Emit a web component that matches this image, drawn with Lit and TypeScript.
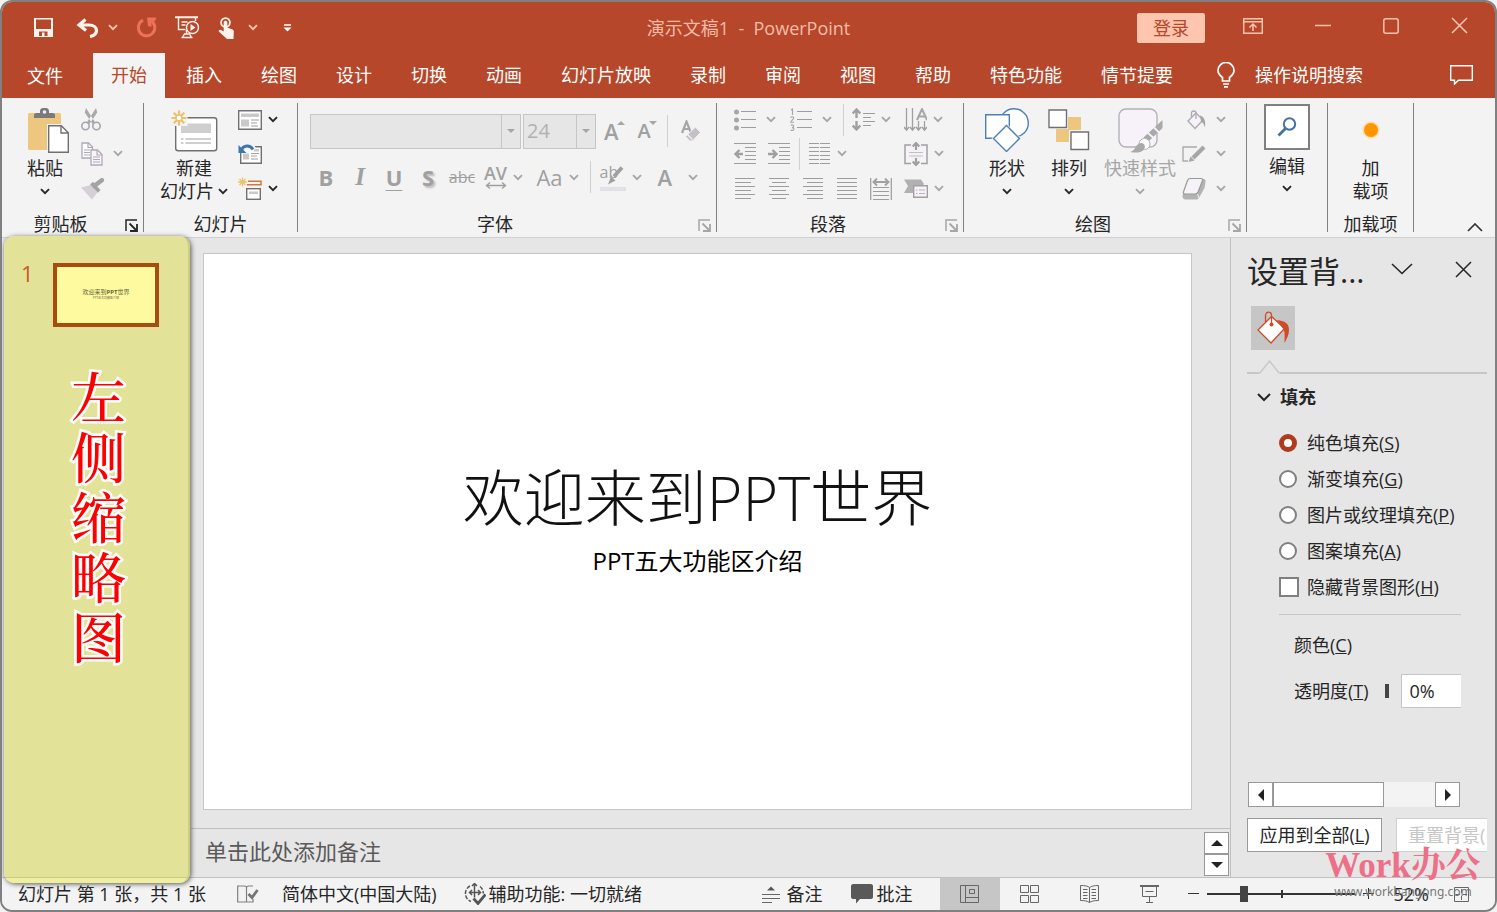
import { LitElement, html, svg, css } from "lit";
import { customElement, state } from "lit/decorators.js";

const icon = (w: number, h: number, body: unknown) =>
  html`<svg class="ic" width=${w} height=${h} viewBox="0 0 ${w} ${h}" fill="none" aria-hidden="true">${body}</svg>`;

const chev = () =>
  icon(10, 7, svg`<path d="M1 1.2l4 4 4-4" stroke="currentColor" stroke-width="1.9"/>`);

const lines = (rows: [number, number, number][], color = "#9d9d9d") =>
  rows.map(([x1, x2, y]) => svg`<path d="M${x1} ${y - 0.5}H${x2}" stroke=${color} stroke-width="1"/>`);

const I = {
  save: icon(19, 19, svg`<path d="M0 0h19v19H0z" fill="#fff3ee"/><path d="M2 1.5h15v9.500H2z" fill="#b7472a"/><path d="M5 13.500h8.500V18H5z" fill="#b7472a"/><path d="M8 14.500h2.500V18H8z" fill="#fff3ee"/>`),
  undo: icon(23, 20, svg`<path d="M9.500 1.500L3 7l7 5.500M3.500 7H13c5 0 7.500 2.600 7.500 5.500 0 3.200-2.500 5.300-6.500 6" stroke="#fff3ee" stroke-width="3.200"/>`),
  redo: icon(21, 21, svg`<path d="M7 3.200A8.200 8.200 0 1 0 15.500 4" stroke="#ec7156" stroke-width="3"/><path d="M11 0.500h9.500L19 4h-3.500v6L12 9z" fill="#ec7156"/>`),
  show: icon(25, 23, svg`<path d="M0 1.200h23" stroke="#fff3ee" stroke-width="2"/><path d="M3.500 2v11.500h7M20.500 2v3M6.500 6h6M6.500 9h4M11.500 14v4M6.500 21.500h11M9.500 18h5l2 3.500h-9z" stroke="#fff3ee" stroke-width="1.400"/><circle cx="17.500" cy="11.500" r="6" fill="#b7472a" stroke="#fff3ee" stroke-width="1.400"/><path d="M15.500 8l5 3.500-5 3.500z" fill="#fff3ee"/>`),
  touch: icon(17, 22, svg`<circle cx="7.500" cy="5.500" r="4.400" stroke="#fff3ee" stroke-width="1.800"/><path d="M5.700 5.500c0-2.400 3.600-2.400 3.600 0v5l5.200 2c1 .5 1.500 1.200 1.300 2.300L15.500 22H9L1 14.700c-1-1.200.6-2.700 2-1.700l2.700 1.500z" fill="#fff3ee"/>`),
  more: icon(9, 8, svg`<path d="M1 1h7" stroke="#fff" stroke-width="1.500"/><path d="M0.500 3.500h8l-4 4z" fill="#fff"/>`),
  ribbonOpt: icon(20, 16, svg`<path d="M.7.700h18.600v14.600H.7zM.7 3.700h18.600M10 13V6.500M6.500 9.500L10 6l3.500 3.500" stroke="#ffc5b1" stroke-width="1.500"/>`),
  min: icon(16, 16, svg`<path d="M0 7.500h16" stroke="#ffc5b1" stroke-width="1.400"/>`),
  max: icon(16, 16, svg`<rect x=".8" y=".8" width="14.400" height="14.400" rx="2" stroke="#ffc5b1" stroke-width="1.500"/>`),
  close: icon(17, 17, svg`<path d="M1 1l15 15M16 1L1 16" stroke="currentColor" stroke-width="1.500"/>`),
  bulb: icon(18, 26, svg`<path d="M5.500 19v-3.500C3 13.500 1 12 1 8.500a8 8 0 0 1 16 0c0 3.500-2 5-4.500 7V19zM6 22h6M7 24.800h4" stroke="#fff" stroke-width="1.700"/>`),
  comment: icon(23, 20, svg`<path d="M.7.700h21.600v14.500H8.500L4.500 19v-3.800H.7z" stroke="#fff" stroke-width="1.400"/>`),
  paste: icon(48, 45, svg`<g transform="translate(7)"><rect x="0" y="5" width="33" height="37" rx="1.500" fill="#edc67f"/><path d="M6 10V7c0-1.300 1-2 2.500-2h3.500V3c0-2 1.500-3 3-3h3c1.500 0 3 1 3 3v2h3.500c1.500 0 2.500.7 2.500 2v3z" fill="#7a7a7a"/><circle cx="16.500" cy="4" r="1.800" fill="#f3f3f3"/><path d="M19 16h17l6 8v21H19z" fill="#f3f3f3"/><path d="M20.700 17.700h12.600l7 7v19.600H20.700z" fill="#fff" stroke="#707070" stroke-width="1.400"/><path d="M33 18v7h7" stroke="#707070" stroke-width="1.400"/></g>`),
  cut: icon(21, 23, svg`<circle cx="4.500" cy="18" r="3.700" stroke="#a9a3ad" stroke-width="1.600"/><circle cx="15.500" cy="18" r="3.700" stroke="#a9a3ad" stroke-width="1.600"/><path d="M5.500 15L15 0l1.200 4.500L8.500 16zM14.500 15L5 0 3.800 4.500 11.500 16z" fill="#a9a9a9"/>`),
  copy: icon(22, 24, svg`<path d="M1 1h6.500l4 4v11H1z" fill="#fff" stroke="#b0a9b3" stroke-width="1.300"/><path d="M7 1v4.500h4.500M3 8h6M3 10.500h6M3 13h6" stroke="#b0a9b3" stroke-width="1.200"/><path d="M10 8h6.500l4.500 4.500V23H10z" fill="#f8f4fa" stroke="#b0a9b3" stroke-width="1.300"/><path d="M16 8v5h5M12 15h7M12 17.500h7M12 20h7" stroke="#b0a9b3" stroke-width="1.200"/>`),
  painter: icon(24, 22, svg`<path d="M0 9.500L10 7l6.500 7.500L11 21.500z" fill="#d4d0d6"/><path d="M9 6.500l3-2.700L19.500 12 17 14.700z" fill="#a3a3a3"/><path d="M14.500 7L20.800 2.200" stroke="#a3a3a3" stroke-width="4.500" stroke-linecap="round"/>`),
  newSlide: icon(48, 44, svg`<rect x="5.700" y="9.700" width="41" height="33" rx="2.500" fill="#fff" stroke="#707070" stroke-width="1.400"/><path d="M11 15.500h30V25H11z" fill="#cfcfcf"/><path d="M11 31h2.500M15.500 31H41M11 35h2.500M15.500 35H41" stroke="#9f9f9f" stroke-width="1.200"/><path d="M0 2h17.500v16H0z" fill="#f3f3f3"/><path d="M9 2.500v15M1.500 10h15M3.700 4.700l10.600 10.600M14.300 4.700L3.700 15.300" stroke="#edc06c" stroke-width="2.200"/><circle cx="9" cy="10" r="3" fill="#fff" stroke="#edc06c" stroke-width="1.500"/>`),
  layout: icon(24, 20, svg`<path d="M.7.700h22.600v18.600H.7z" fill="#fff" stroke="#707070" stroke-width="1.400"/><path d="M3 3.500h18V7H3zM3 9.500h8v7H3z" fill="#c9c9c9"/><path d="M13 10h8M13 13h6M13 16h7" stroke="#9f9f9f" stroke-width="1.200"/>`),
  reset: icon(24, 20, svg`<path d="M2.700 2.700h20.600v16.600H2.700z" fill="#fff" stroke="#707070" stroke-width="1.400"/><path d="M5 9.500h6v6H5zM16 5h5v2.500h-5z" fill="#c9c9c9"/><path d="M13 9.500h8M13 12h6M13 15h7" stroke="#9f9f9f" stroke-width="1.200"/><path d="M15.500 6C12.500-.5 5.500 0 3 6.500" stroke="#f3f3f3" stroke-width="6"/><path d="M15 5.500C12 .5 5.500 1 3.500 6" stroke="#3f76ae" stroke-width="2.800"/><path d="M.5 1v8h8z" fill="#3f76ae"/>`),
  section: icon(24, 23, svg`<path d="M4.500.5v9M0 5h9M1.500 2l6 6M7.500 2l-6 6" stroke="#edc06c" stroke-width="1.300"/><path d="M10 4.200h13v3.600H9" stroke="#d07b3c" stroke-width="1.500"/><rect x="8.700" y="11.700" width="13.600" height="10.600" fill="#fff" stroke="#707070" stroke-width="1.400"/><path d="M11 14.500h9V17h-9z" fill="#c9c9c9"/>`),
  launcher: icon(13, 13, svg`<path d="M1 12V1h11" stroke="currentColor" stroke-width="1.500"/><path d="M4.500 4.500l6.500 6.500M12 5v7H5" stroke="currentColor" stroke-width="1.800"/>`),
  bold: html`<span class="gl bold">B</span>`,
  italic: html`<span class="gl ital">I</span>`,
  under: html`<span class="gl bold ul">U</span>`,
  shadow: html`<span class="gl bold shade">S</span>`,
  strike: html`<span class="gl strike">abc</span>`,
  tri: icon(8, 4, svg`<path d="M0 4l4-4 4 4z" fill="#a6a6a6"/>`),
  triDown: icon(8, 4, svg`<path d="M0 0l4 4 4-4z" fill="#a6a6a6"/>`),
  spacing: icon(22, 7, svg`<path d="M1.500 3.500h19M5 .5l-3.500 3L5 6.500M17 .5l3.500 3-3.500 3" stroke="#a0a0a0" stroke-width="1.400"/>`),
  clear: icon(20, 22, svg`<path d="M1 13L5.500 1.500 10 13M2.500 9h6" stroke="#a6a6a6" stroke-width="2.200"/><path d="M4.500 16.500L14.500 7l5 5.500-8 8.500H8.500z" fill="#c4c0c7" stroke="#f3f3f3"/><path d="M6.500 14.500l5 5" stroke="#f3f3f3" stroke-width="1.200"/>`),
  pen: icon(18, 19, svg`<path d="M8 10.500L16 1.500" stroke="#a0a0a0" stroke-width="3.800"/><path d="M5 10.500l4.500 4-7.500 4z" fill="#a0a0a0"/>`),
  bullets: icon(22, 22, svg`<circle cx="2.500" cy="3" r="2.500" fill="#a6a6a6"/><circle cx="2.500" cy="11" r="2.500" fill="#a6a6a6"/><circle cx="2.500" cy="19" r="2.500" fill="#a6a6a6"/>${lines([[7, 22, 3], [7, 22, 11], [7, 22, 19]])}`),
  numbers: icon(22, 24, svg`<path d="M1 2l1.500-1v6M.7 9.800c.5-1.500 3-1.300 3 .3 0 1.200-3 3-3 4.200H4M.7 17.300c1-.8 3-.5 3 .8S2 19.600 2 19.600s2 0 2 1.500-2.500 1.700-3.300.9" stroke="#a6a6a6" stroke-width="1.100"/>${lines([[7, 22, 4], [7, 22, 12], [7, 22, 20]])}`),
  lineSp: icon(23, 23, svg`<path d="M4.500 2v8M4.500 13v8M.7 5.500l3.800-4 3.800 4M.7 17.500l3.800 4 3.800-4" stroke="#a0a0a0" stroke-width="2.400"/>${lines([[11, 23, 6], [11, 19, 10], [11, 23, 14], [11, 19, 18]])}`),
  textDir: icon(23, 24, svg`<path d="M2.500 0v22M8.500 0v22M14.500 13v9M20.500 13v9" stroke="#a0a0a0" stroke-width="1.300"/><path d="M0 19l2.500 3L5 19M6 19l2.500 3 2.500-3M12 19l2.500 3 2.500-3M18 19l2.500 3 2.500-3" stroke="#a0a0a0" stroke-width="1.500"/><path d="M13 12L18 1l5 11M14.800 8.500h6.500" stroke="#a6a6a6" stroke-width="2"/>`),
  outdent: icon(22, 22, svg`${lines([[0, 22, 1], [11, 22, 5], [11, 22, 9], [11, 22, 13], [11, 22, 17], [0, 22, 21]])}<path d="M9 11H2.500M5.500 7L1.500 11l4 4" stroke="#a0a0a0" stroke-width="2.400"/>`),
  indent: icon(22, 22, svg`${lines([[0, 22, 1], [11, 22, 5], [11, 22, 9], [11, 22, 13], [11, 22, 17], [0, 22, 21]])}<path d="M0 11h7M4.500 7l4 4-4 4" stroke="#a0a0a0" stroke-width="2.400"/>`),
  columns: icon(22, 22, svg`${lines([1, 5, 9, 13, 17, 21].flatMap((y) => [[0, 10, y], [11, 21, y]] as [number, number, number][]))}`),
  vAlign: icon(24, 24, svg`<path d="M7 3H1v18.500h6M17 3h6v18.500h-6" fill="#f7f2fa" stroke="#a0a0a0" stroke-width="1.500"/><path d="M5 10.500h14M5 14h14" stroke="#c4bdc8" stroke-width="1.200"/><path d="M12 8V1.500M8.700 4.500L12 1l3.300 3.500M12 16v6.500M8.700 19.500L12 23l3.300-3.500" stroke="#a0a0a0" stroke-width="2.200"/>`),
  left: icon(20, 22, svg`${lines([[0, 20, 1], [0, 16, 5], [0, 20, 9], [0, 16, 13], [0, 20, 17], [0, 16, 21]])}`),
  center: icon(20, 22, svg`${lines([[0, 20, 1], [3, 17, 5], [0, 20, 9], [3, 17, 13], [0, 20, 17], [3, 17, 21]])}`),
  right: icon(20, 22, svg`${lines([[0, 20, 1], [4, 20, 5], [0, 20, 9], [4, 20, 13], [0, 20, 17], [4, 20, 21]])}`),
  justify: icon(20, 22, svg`${lines([1, 5, 9, 13, 17, 21].map((y) => [0, 20, y] as [number, number, number]))}`),
  distribute: icon(22, 22, svg`<path d="M.7 0v22M21.300 0v22" stroke="#a0a0a0" stroke-width="1.300"/><path d="M4 4h14M7 .5L3.500 4 7 7.500M15 .5L18.500 4 15 7.500" stroke="#a0a0a0" stroke-width="1.900"/>${lines([[3, 19, 10], [3, 19, 14], [3, 19, 18], [3, 19, 22]])}`),
  smart: icon(24, 19, svg`<path d="M0 .5h17l3 4.500-4 4H9v5H0l4-7z" fill="#b1b1b1"/><path d="M9.700 6.700h13.600v11.600H9.700z" fill="#f7f2fa" stroke="#a0a0a0" stroke-width="1.400"/><path d="M12 11h1.500M15 11h6M12 14.500h1.500M15 14.500h6" stroke="#b8b0bd" stroke-width="1.200"/>`),
  shapes: icon(44, 44, svg`<circle cx="29" cy="15" r="14.300" fill="#fff" stroke="#4c80b6" stroke-width="1.400"/><path d="M.7 6.700h23.600v23.600H.7z" fill="#fff" stroke="#4c80b6" stroke-width="1.400"/><path d="M21.500 15.500l15 15-15 15-15-15z" fill="#f3f3f3"/><path d="M21.500 17.500l13 13-13 13-13-13z" fill="#fff" stroke="#4c80b6" stroke-width="1.400"/>`),
  arrange: icon(42, 42, svg`<path d="M20 8h13v13H20zM8 20h13v13H8z" fill="#edc67f"/><path d="M1 1h17.500v17.500H1zM23 23h17.500v17.500H23z" fill="#fff" stroke="#f3f3f3" stroke-width="3"/><path d="M1 1h17.500v17.500H1zM23 23h17.500v17.500H23z" fill="#fff" stroke="#707070" stroke-width="1.400"/>`),
  quick: icon(46, 46, svg`<rect x="2" y="2" width="38" height="38" rx="7" fill="#f7f2fa" stroke="#b5b0b8" stroke-width="1.400"/><path d="M45.500 13v8L32 34l-5.500-3.500z" fill="#a9a9a9"/><path d="M37 20.500l5 5M31 26l5.500 5" stroke="#f3f3f3" stroke-width="1.800"/><circle cx="27.500" cy="37" r="5.500" fill="#fff" stroke="#b5b0b8"/><path d="M13 45c6-1 5-9 12-9 3.500 1 3.500 5 1.500 7-3 3-8 3-13.500 2z" fill="#a9a9a9"/>`),
  fill: icon(24, 20, svg`<g transform="translate(2)"><path d="M4 11l8-8 7 7-8 8.500z" fill="#f7f2fa" stroke="#aaa" stroke-width="1.300"/><path d="M7.500 7V2.500C8 .5 11.500.5 12 2.500V9" stroke="#aaa" stroke-width="1.300"/><path d="M16 5.500c4 1 6 5 5 12-1-3-2-5-4-6z" fill="#a6a6a6"/></g>`),
  outline: icon(24, 20, svg`<path d="M15 3H1v14h5" stroke="#aaa" stroke-width="1.400"/><path d="M11 14L22 3" stroke="#a6a6a6" stroke-width="4.200"/><path d="M8.500 12.500l4 4L6.500 18z" fill="#a6a6a6"/>`),
  effect: icon(24, 23, svg`<path d="M7 2h14c2 0 3 1 2.500 3l-1 6-5 9c-1 2-2 2.500-4 2.500H3.500c-2 0-3.500-2-3-4z" fill="#b3b3b3"/><path d="M8 1.500h11c1.500 0 2 .8 1.500 2L16 15c-.6 1.300-1.500 2-3 2H3c-1.500 0-2-1-1.500-2.300L5.500 3.500c.6-1.300 1.200-2 2.500-2z" fill="#f7f2fa" stroke="#999" stroke-width="1.200"/><path d="M15.500 17l1.500 4" stroke="#f3f3f3"/>`),
  find: icon(20, 20, svg`<circle cx="12.500" cy="7" r="5.700" stroke="#4272a8" stroke-width="2"/><path d="M8.500 11.500L1.500 18.500" stroke="#4272a8" stroke-width="2.800"/>`),
  addin: icon(18, 18, svg`<circle cx="9" cy="9" r="8.500" fill="#ffdca8"/><circle cx="9" cy="9" r="7" fill="#ff9500"/>`),
  collapse: icon(16, 9, svg`<path d="M1 8l7-7 7 7" stroke="#333" stroke-width="1.700"/>`),
  paneDown: icon(22, 12, svg`<path d="M1 1l10 9.500L21 1" stroke="#262626" stroke-width="1.600"/>`),
  bucket: icon(34, 34, svg`<path d="M2 19L15.500 5.500 28.500 17.500 15 32z" fill="#fff" stroke="#cf4b27" stroke-width="1.300"/><path d="M9.500 11V4.500C10-.2 15.500 0 15.500 4.500V13" stroke="#cf4b27" stroke-width="1.300"/><circle cx="15.500" cy="13.500" r="2" fill="#cf4b27"/><path d="M21 9c9 1 12 4 12 10 0 5-2 8-4.500 13 0-7 1-12-2-15z" fill="#cf4b27"/>`),
  book: icon(22, 20, svg`<path d="M9.500 3.500v15M9.500 18H.7V2h6.500c1.500 0 2.300.5 2.300 1.500C9.500 2.500 10.500 2 12 2h4M9.500 18H16v-3" stroke="#808080" stroke-width="1.200"/><path d="M11.500 10l3.500 3.500L20.500 6" stroke="#757575" stroke-width="2.800"/>`),
  access: icon(22, 22, svg`<path d="M6 3A8.500 8.500 0 0 0 7 18.500M16 3.500c2 1.500 3.300 4 3.300 7" stroke="#555" stroke-width="1.500" stroke-dasharray="4 1.500"/><path d="M10.500 .5v9M8 3l2.500-2.500L13 3M5.500 9.500h10.500M8 7L5.500 9.500 8 12M10.500 9.500v5M14 7l2.500 2.500L14 12" stroke="#555" stroke-width="1.500"/><path d="M9.500 15.500l4.500 5 7.500-9" stroke="#555" stroke-width="2.800"/>`),
  notes: icon(18, 17, svg`<path d="M5 4.500l4-4 4 4z" fill="#555"/><path d="M0 8.500h18M0 12.500h18M0 16.500h10" stroke="#666" stroke-width="1"/>`),
  bubble: icon(22, 20, svg`<path d="M2 0h18c1 0 2 1 2 2v11c0 1-1 2-2 2H9l-4 4.500V15H2c-1 0-2-1-2-2V2C0 1 1 0 2 0z" fill="#595959"/>`),
  normal: icon(19, 18, svg`<path d="M.5.500h18v17H.5zM5.500 1v16M5.500 12.500H18M9.500 4.500h5v4h-5z" stroke="#666" stroke-width="1"/>`),
  sorter: icon(19, 18, svg`<path d="M.5.500h8v7h-8zM10.500.5h8v7h-8zM.5 10.500h8v7h-8zM10.500 10.500h8v7h-8z" stroke="#666" stroke-width="1"/>`),
  reading: icon(19, 18, svg`<path d="M9.500 2.500v15M9.500 2.500C8 1 5 .5.500.5v15c4 0 7 .5 9 2 2-1.500 5-2 9-2V.5c-4 0-7 .5-9 2zM3 4.500h4.500M3 7.500h4.500M3 10.500h4.500M3 13.500h4.500M11.500 4.500H16M11.500 7.500H16M11.500 10.500H16M11.500 13.500H16" stroke="#666" stroke-width="1"/>`),
  present: icon(19, 18, svg`<path d="M0 1h19" stroke="#666" stroke-width="2"/><path d="M2.500 2v9.500h14V2M5.500 6.500h8M9.500 11.500v6M6 17.500h7" stroke="#666" stroke-width="1"/>`),
  fit: icon(15, 15, svg`<path d="M.5.500h14v14H.5z" stroke="#666" stroke-width="1"/><path d="M7.500 2v4M7.500 9v4M2 7.500h4M9 7.500h4" stroke="#666" stroke-width="1"/>`),
};

const TABS = ["插入", "绘图", "设计", "切换", "动画", "幻灯片放映", "录制", "审阅", "视图", "帮助", "特色功能", "情节提要"];
const FILLS: [string, string][] = [["纯色填充", "S"], ["渐变填充", "G"], ["图片或纹理填充", "P"], ["图案填充", "A"]];

@customElement("app-root")
export class AppRoot extends LitElement {
  @state() private fill = 0;

  static styles = css`
    :host { display: block; height: 100vh; background: #f2f2f2; color: #262626;
      font: 18px/24px "Open Sans", "Noto Sans CJK SC", sans-serif; }
    * { box-sizing: border-box; }
    button, input, select { font: inherit; color: inherit; background: none; border: 0; padding: 0; margin: 0; border-radius: 0; }
    button { display: flex; align-items: center; justify-content: center; white-space: nowrap; }
    .ic { display: block; flex: none; }
    .window { height: 100%; display: flex; flex-direction: column; border: 2px solid #808080; border-radius: 12px; overflow: hidden; background: #e6e6e6; }

    .titlebar { display: grid; grid-template-columns: 1fr auto 1fr; align-items: center; height: 51px; background: #b7472a; color: #ffc5b1; flex: none; }
    .quick { display: flex; align-items: center; padding-left: 32px; gap: 18px; }
    .quick .save { margin-right: 5px; }
    .quick .split { display: flex; align-items: center; gap: 9px; }
    .quick .touch { gap: 13px; }
    .quick .more { margin-left: 7px; }
    .doc { margin: 0; font: inherit; white-space: pre; color: #f5bba8; }
    .sys { display: flex; align-items: center; justify-content: flex-end; padding-right: 27px; }
    .login { width: 68px; height: 30px; background: #fec5af; color: #b7472a; border-radius: 2px; margin-right: 38px; }
    .sys .ctl { margin-right: 52px; height: 22px; padding-bottom: 4px; }
    .sys .ctl.last { margin-right: 0; }

    .tabs { display: flex; align-items: stretch; height: 45px; background: #b7472a; color: #fff; flex: none; gap: 3px; }
    .tabs button { padding-bottom: 2px; }
    .tab { padding: 0 18px; }
    .tab.file { padding: 0 27px 0 25px; }
    .tab.on { background: #f3f3f3; color: #b7472a; }
    .tell { margin-left: 23px; gap: 20px; }
    .talk { margin-left: auto; margin-right: 22px; }

    .ribbon { display: flex; height: 140px; background: #f3f3f3; border-bottom: 1px solid #d0d0d0; flex: none; padding: 5px 0; }
    .group { display: flex; flex-direction: column; border-right: 1px solid #808080; flex: none; }
    .body { display: flex; flex: 1; min-height: 0; }
    .cap { display: flex; align-items: center; height: 16px; line-height: 16px; text-align: center; white-space: nowrap; color: #262626; }
    .cap span { flex: 1; }
    .cap button { width: 24px; padding-top: 2px; color: #a6a6a6; }
    .cap .dark { color: #262626; }
    .big { flex-direction: column; justify-content: flex-start; gap: 0; line-height: 23px; }
    .big .pic { height: 54px; display: flex; align-items: center; justify-content: center; }
    .big .chev, .big .row { height: 23px; display: flex; align-items: center; gap: 4px; }
    .stack { display: grid; grid-template-rows: 33px 35px 35px; align-items: center; justify-items: start; align-content: start; }
    .pair { gap: 6px; }
    .pair.wide { gap: 10px; }
    .off { color: #a6a6a6; }
    .clip { width: 142px; } .clip .body { padding-left: 18px; gap: 11px; } .clip .big { width: 50px; } .clip .pair { gap: 10px; }
    .slides { width: 154px; } .slides .body { padding-left: 10px; gap: 4px; } .slides .big { width: 80px; }
    .font { width: 419px; } .font .body { display: block; padding: 5px 0 0 12px; }
    .frow { display: flex; align-items: center; height: 46px; }
    .frow.fmt { display: grid; grid-template-columns: 34px 34px 34px 34px 34px 49px 59px 7px 53px 61px; justify-items: center; margin-left: -1px; }
    .combo { display: flex; width: 211px; height: 35px; border: 1px solid #c6c6c6; background: #e6e6e6; margin-right: 2px; }
    .combo.size { width: 73px; margin-right: 8px; }
    .combo select { appearance: none; flex: 1; min-width: 0; padding-left: 3px; font-size: 20px; color: #b1b1b1; opacity: 1; }
    .combo .drop { width: 19px; border-left: 1px solid #c6c6c6; display: flex; align-items: center; justify-content: center; }
    .bar { width: 1px; height: 32px; background: #d0d0d0; }
    .gl { font-size: 22px; line-height: 26px; color: #a0a0a0; }
    .bold { font-weight: 700; }
    .ital { font-family: "Liberation Serif", serif; font-style: italic; font-weight: 700; font-size: 25px; }
    .ul { text-decoration: underline; text-decoration-thickness: 1px; text-underline-offset: 4px; }
    .shade { text-shadow: 2px 2px 2px #bbb; }
    .strike { font-size: 16px; text-decoration: line-through; }
    .semi { font-weight: 600; }
    .sizer { align-items: flex-start; margin-right: 13px; }
    .sizer .ic { margin-top: 3px; margin-left: -2px; }
    .sizer .gl.small { font-size: 20px; }
    .sizer.down { margin-right: 10px; }
    .av { display: flex; flex-direction: column; align-items: center; font-size: 18px; line-height: 17px; font-weight: 600; color: #a0a0a0; }
    .hl { display: flex; width: 26px; height: 28px; align-items: flex-start; border-bottom: 4px solid #e3dfe6; font-size: 16px; line-height: 18px; color: #a0a0a0; }
    .hl .ic { margin: 3px 0 0 -12px; }
    .fontA { width: 24px; text-align: left; }
    .clearfmt { margin-left: 13px; }
    .para { width: 247px; } .para .body { display: block; padding-left: 11px; }
    .prow { display: grid; height: 35px; align-items: center; justify-items: center; }
    .p1 { height: 33px; grid-template-columns: 54px 58px 7px 49px 55px; }
    .p2 { grid-template-columns: 34px 34px 7px 50px 43px 55px; }
    .p3 { grid-template-columns: 34px 34px 34px 34px 34px 51px; }
    .p2 .end { grid-column: 6; }
    .draw { width: 283px; } .draw .body { padding-left: 12px; } .draw .big { width: 62px; } .draw .big.off { width: 80px; } .draw .stack { padding-left: 2px; } .draw .pair { gap: 10px; }
    .edit { width: 81px; } .edit .body { justify-content: center; } .edit .big .pic { width: 46px; height: 46px; margin: 1px 0 5px; background: #fff; border: 2px solid #808080; }
    .edit .big { line-height: 22px; }
    .adds { width: 86px; } .adds .body { justify-content: center; }
    .fold { margin: auto 12px 0 auto; }

    .main { display: grid; grid-template-columns: 189px minmax(0, 1fr) 265px; flex: 1; min-height: 0; position: relative; }
    .thumbs { position: absolute; z-index: 2; left: 2px; top: -2px; bottom: -6px; width: 186px; border-radius: 10px; border-right: 2px solid #cfcd83;
      background: linear-gradient(to top, #efef9e 5px, #c9c989 5px, #c9c989 6px, #e3e299 6px); box-shadow: 1px 1px 5px #555; display: flex; flex-direction: column; padding: 27px 29px 0 17px; }
    .thumb { display: flex; justify-content: space-between; color: #c55a28; font-size: 22px; line-height: 20px; }
    .mini { width: 106px; height: 64px; border: 4px solid #a94c10; background: #fdfa9f; color: #66643c; display: flex; flex-direction: column; align-items: center; justify-content: center; font-size: 6px; line-height: 8px; padding-bottom: 2px; }
    .mini small { font-size: 3px; line-height: 4px; }
    .callout { margin: 38px 0 0 17px; align-self: center; width: 60px; font-family: "Noto Serif CJK SC", "Noto Sans CJK SC", serif; font-weight: 500; font-size: 55px; line-height: 60px; text-align: center; color: #f00; -webkit-text-stroke: 5px #fff; paint-order: stroke fill; }
    .stage { grid-column: 2; display: flex; flex-direction: column; min-width: 0; }
    .canvas { flex: 1; display: flex; padding: 15px 38px 18px 12px; border-bottom: 1px solid #c0c0c0; }
    .slide { flex: 1; background: #fff; border: 1px solid #c6c6c6; display: flex; flex-direction: column; align-items: center; padding-top: 204px; color: #111; }
    .slide h2 { margin: 0; font-weight: 300; font-size: 61px; line-height: 80px; }
    .slide p { margin: 7px 0 0; font-size: 24px; line-height: 32px; color: #000; }
    .note { display: flex; justify-content: space-between; height: 48px; padding: 3px 1px 0 14px; }
    .note input { flex: 1; font-size: 22px; color: #5a5a5a; height: 38px; outline: 0; }
    .note input::placeholder { color: #5a5a5a; opacity: 1; }
    .pager { display: flex; flex-direction: column; }
    .pager button { width: 25px; height: 22px; border: 1px solid #999; background: #fff; }

    .pane { grid-column: 3; border-left: 1px solid #c0c0c0; padding: 11px 8px 25px 16px; display: flex; flex-direction: column; min-width: 0; overflow: hidden; }
    .phead { display: flex; align-items: center; height: 44px; }
    .phead h1 { margin: 0; font-weight: 400; font-size: 31px; line-height: 44px; width: 144px; white-space: nowrap; }
    .phead .x { margin-left: auto; margin-right: 15px; padding-bottom: 4px; }
    .phead .v { padding-bottom: 4px; }
    .paint { width: 44px; height: 44px; background: #c6c6c6; margin: 13px 0 0 4px; flex: none; }
    .notch { display: flex; align-items: flex-end; margin-top: 10px; }
    .notch i { height: 2px; width: 12px; background: #c6c6c6; }
    .notch i.rest { flex: 1; }
    .sect { justify-content: flex-start; gap: 9px; font-weight: 700; height: 24px; margin: 11px 0 16px 10px; }
    .opt { display: flex; align-items: center; height: 36px; padding-left: 32px; gap: 10px; white-space: nowrap; }
    .opt input { appearance: none; width: 18px; height: 18px; border: 2px solid #808080; border-radius: 50%; background: #fff; flex: none; }
    .opt input:checked { border: 5px solid #b03a20; }
    .opt input.sq { width: 20px; height: 20px; border-radius: 0; }
    .opt.check { gap: 8px; }
    .rule { height: 1px; background: #c6c6c6; margin: 9px 26px 0 32px; }
    .field { display: flex; align-items: center; padding-left: 47px; margin-top: 18px; height: 24px; white-space: nowrap; }
    .field.tr { margin-top: 17px; height: 34px; padding-right: 26px; }
    .tr .knob { appearance: none; width: 4px; height: 14px; margin: 0 12px 0 16px; }
    .knob::-webkit-slider-thumb { appearance: none; width: 4px; height: 14px; background: #444; }
    .tr .pct { flex: 1; min-width: 0; height: 34px; background: #fff; border: 1px solid #c6c6c6; border-right: 0; padding-left: 8px; }
    .hbar { display: flex; margin: auto 27px 11px 1px; height: 25px; background: #f3f3f3; }
    .hbar button { width: 25px; border: 1px solid #999; background: #fff; }
    .hbar .grip { width: 111px; margin-right: auto; }
    .acts { display: flex; gap: 14px; height: 34px; }
    .acts button { border: 1px solid #999; background: #fff; width: 135px; flex: none; }
    .acts button.dim { color: #c6c6c6; border-color: #d0d0d0; border-right: 0; flex: 1; justify-content: flex-start; padding-left: 11px; }

    .status { display: flex; align-items: center; height: 33px; background: #f3f3f3; border-top: 1px solid #c0c0c0; flex: none; padding: 0 26px 0 16px; white-space: nowrap; }
    .status .bk { margin: 0 23px 0 31px; }
    .status .ac { margin-left: 27px; gap: 3px; }
    .status .nt { margin-left: auto; gap: 7px; margin-right: 28px; }
    .status .cm { gap: 4px; margin-right: 27px; }
    .status .vw { width: 60px; height: 32px; }
    .status .vw.on { background: #c6c6c6; }
    .zoom { display: flex; align-items: center; gap: 8px; margin-left: 8px; }
    .zoom input { appearance: none; width: 148px; height: 16px; background: linear-gradient(#333, #333) 74px 50% / 2px 8px no-repeat, linear-gradient(#333, #333) 0 50% / 100% 2px no-repeat; }
    .zoom input::-webkit-slider-thumb { appearance: none; width: 8px; height: 16px; background: #444; }
    .pctz { margin: 0 25px 0 20px; }

    .mark { position: absolute; z-index: 3; right: 14px; top: 609px; width: 156px; display: flex; flex-direction: column; align-items: center; pointer-events: none; white-space: nowrap; }
    .mark b { font: 700 35px/38px "Liberation Serif", "Noto Serif CJK SC", "Noto Sans CJK SC", serif; color: #ee6f88; }
    .mark span { font: 12px/14px "Noto Sans", sans-serif; color: #777; }
  `;

  private cap(text: string, launch = "") {
    return html`<div class="cap"><span>${text}</span>${launch ? html`<button class=${launch} aria-label="${text}设置">${I.launcher}</button>` : ""}</div>`;
  }

  private b(ic: unknown, label: string, drop = false, cls = "") {
    return html`<button class="pair ${cls}" aria-label=${label}>${ic}${drop ? chev() : ""}</button>`;
  }

  private big(ic: unknown, label: string, cls = "") {
    return html`<button class="big ${cls}"><span class="pic">${ic}</span><span>${label}</span><span class="chev">${chev()}</span></button>`;
  }

  private renderTitle() {
    return html`<header class="titlebar">
      <div class="quick">
        <button class="save" aria-label="保存">${I.save}</button>
        <button class="split" aria-label="撤消">${I.undo}${chev()}</button>
        <button aria-label="重复">${I.redo}</button>
        <button aria-label="从头开始">${I.show}</button>
        <button class="split touch" aria-label="触摸模式">${I.touch}${chev()}</button>
        <button class="more" aria-label="自定义">${I.more}</button>
      </div>
      <h1 class="doc">演示文稿1  -  PowerPoint</h1>
      <div class="sys">
        <button class="login">登录</button>
        <button class="ctl" aria-label="功能区显示选项">${I.ribbonOpt}</button>
        <button class="ctl" aria-label="最小化">${I.min}</button>
        <button class="ctl" aria-label="最大化">${I.max}</button>
        <button class="ctl last" aria-label="关闭">${I.close}</button>
      </div>
    </header>
    <nav class="tabs">
      <button class="tab file">文件</button><button class="tab on">开始</button>
      ${TABS.map((t) => html`<button class="tab">${t}</button>`)}
      <button class="tell">${I.bulb}<span>操作说明搜索</span></button>
      <button class="talk" aria-label="批注">${I.comment}</button>
    </nav>`;
  }

  private renderRibbon() {
    return html`<section class="ribbon">
      <div class="group clip"><div class="body">
        ${this.big(I.paste, "粘贴")}
        <div class="stack off">${this.b(I.cut, "剪切")}${this.b(I.copy, "复制", true)}${this.b(I.painter, "格式刷")}</div>
      </div>${this.cap("剪贴板", "dark")}</div>

      <div class="group slides"><div class="body">
        <button class="big"><span class="pic">${I.newSlide}</span><span>新建</span><span class="row">幻灯片${chev()}</span></button>
        <div class="stack">${this.b(I.layout, "版式", true)}${this.b(I.reset, "重置")}${this.b(I.section, "节", true)}</div>
      </div>${this.cap("幻灯片")}</div>

      <div class="group font off"><div class="body">
        <div class="frow">
          <div class="combo"><select aria-label="字体" disabled></select><span class="drop">${I.triDown}</span></div>
          <div class="combo size"><select aria-label="字号" disabled><option>24</option></select><span class="drop">${I.triDown}</span></div>
          <button class="sizer" aria-label="增大字号"><span class="gl semi">A</span>${I.tri}</button>
          <button class="sizer down" aria-label="减小字号"><span class="gl semi small">A</span>${I.triDown}</button>
          <i class="bar"></i>
          <button class="clearfmt" aria-label="清除格式">${I.clear}</button>
        </div>
        <div class="frow fmt">
          ${this.b(I.bold, "加粗")}${this.b(I.italic, "倾斜")}${this.b(I.under, "下划线")}${this.b(I.shadow, "阴影")}${this.b(I.strike, "删除线")}
          ${this.b(html`<span class="av">AV${I.spacing}</span>`, "字符间距", true)}
          ${this.b(html`<span class="gl">Aa</span>`, "更改大小写", true)}
          <i class="bar"></i>
          ${this.b(html`<span class="hl">ab${I.pen}</span>`, "突出显示", true)}
          ${this.b(html`<span class="gl semi fontA">A</span>`, "字体颜色", true)}
        </div>
      </div>${this.cap("字体", "light")}</div>

      <div class="group para off"><div class="body">
        <div class="prow p1">${this.b(I.bullets, "项目符号", true, "wide")}${this.b(I.numbers, "编号", true, "wide")}<i class="bar"></i>${this.b(I.lineSp, "行距", true)}${this.b(I.textDir, "文字方向", true)}</div>
        <div class="prow p2">${this.b(I.outdent, "减少缩进")}${this.b(I.indent, "增加缩进")}<i class="bar"></i>${this.b(I.columns, "分栏", true)}${this.b(I.vAlign, "对齐文本", true, "end")}</div>
        <div class="prow p3">${this.b(I.left, "左对齐")}${this.b(I.center, "居中")}${this.b(I.right, "右对齐")}${this.b(I.justify, "两端对齐")}${this.b(I.distribute, "分散对齐")}${this.b(I.smart, "转换为SmartArt", true)}</div>
      </div>${this.cap("段落", "light")}</div>

      <div class="group draw"><div class="body">
        ${this.big(I.shapes, "形状")}${this.big(I.arrange, "排列")}${this.big(I.quick, "快速样式", "off")}
        <div class="stack off">${this.b(I.fill, "形状填充", true)}${this.b(I.outline, "形状轮廓", true)}${this.b(I.effect, "形状效果", true)}</div>
      </div>${this.cap("绘图", "light")}</div>

      <div class="group edit"><div class="body">${this.big(I.find, "编辑")}</div></div>

      <div class="group adds"><div class="body">
        <button class="big"><span class="pic">${I.addin}</span><span>加</span><span class="row">载项</span></button>
      </div>${this.cap("加载项")}</div>
      <button class="fold" aria-label="折叠功能区">${I.collapse}</button>
    </section>`;
  }

  private renderPane() {
    return html`<aside class="pane">
      <div class="phead"><h1>设置背...</h1><button class="v" aria-label="选项">${I.paneDown}</button><button class="x" aria-label="关闭">${I.close}</button></div>
      <button class="paint" aria-label="填充">${I.bucket}</button>
      <div class="notch"><i></i>${icon(21, 14, svg`<path d="M.5 13.500L10.500 1l10 12.500" stroke="#c6c6c6" stroke-width="1.300"/>`)}<i class="rest"></i></div>
      <button class="sect">${icon(14, 9, svg`<path d="M1 1l6 6 6-6" stroke="#262626" stroke-width="2"/>`)}填充</button>
      ${FILLS.map(([t, k], i) => html`<label class="opt"><input type="radio" name="fill" .checked=${this.fill === i} @change=${() => (this.fill = i)} /><span>${t}(<u>${k}</u>)</span></label>`)}
      <label class="opt check"><input class="sq" type="checkbox" /><span>隐藏背景图形(<u>H</u>)</span></label>
      <div class="rule"></div>
      <div class="field">颜色(<u>C</u>)</div>
      <div class="field tr"><label for="pct">透明度(<u>T</u>)</label><input class="knob" type="range" value="0" aria-label="透明度滑块" /><input class="pct" id="pct" value="0%" /></div>
      <div class="hbar">
        <button aria-label="向左">${icon(6, 12, svg`<path d="M6 0v12L0 6z" fill="#222"/>`)}</button><button class="grip" aria-label="滚动条"></button>
        <button aria-label="向右">${icon(6, 12, svg`<path d="M0 0v12l6-6z" fill="#222"/>`)}</button>
      </div>
      <div class="acts"><button>应用到全部(<u>L</u>)</button><button class="dim" aria-label="重置背景">重置背景(</button></div>
    </aside>`;
  }

  private renderStatus() {
    return html`<footer class="status">
      <span>幻灯片 第 1 张，共 1 张</span>
      <button class="bk" aria-label="拼写检查">${I.book}</button>
      <span>简体中文(中国大陆)</span>
      <button class="ac">${I.access}<span>辅助功能: 一切就绪</span></button>
      <button class="nt">${I.notes}备注</button>
      <button class="cm">${I.bubble}批注</button>
      <button class="vw on" aria-label="普通视图">${I.normal}</button>
      <button class="vw" aria-label="幻灯片浏览">${I.sorter}</button>
      <button class="vw" aria-label="阅读视图">${I.reading}</button>
      <button class="vw" aria-label="幻灯片放映">${I.present}</button>
      <div class="zoom">
        <button aria-label="缩小">${icon(11, 12, svg`<path d="M0 5.500h11" stroke="#333" stroke-width="1"/>`)}</button>
        <input type="range" aria-label="显示比例" min="0" max="100" value="24" />
        <button aria-label="放大">${icon(11, 12, svg`<path d="M0 5.500h11M5.500 0v11" stroke="#333" stroke-width="1"/>`)}</button>
      </div>
      <span class="pctz">52%</span>
      <button aria-label="适应窗口">${I.fit}</button>
    </footer>`;
  }

  render() {
    return html`<div class="window">
      ${this.renderTitle()}${this.renderRibbon()}
      <main class="main">
        <aside class="thumbs">
          <div class="thumb"><span>1</span><div class="mini"><span>欢迎来到<b>PPT</b>世界</span><small>PPT五大功能区介绍</small></div></div>
          <div class="callout">左侧缩略图</div>
        </aside>
        <section class="stage">
          <div class="canvas"><article class="slide"><h2>欢迎来到PPT世界</h2><p>PPT五大功能区介绍</p></article></div>
          <div class="note"><input aria-label="备注" placeholder="单击此处添加备注" />
            <div class="pager"><button aria-label="上一张">${icon(12, 6, svg`<path d="M0 6h12L6 0z" fill="#222"/>`)}</button><button aria-label="下一张">${icon(12, 6, svg`<path d="M0 0h12L6 6z" fill="#222"/>`)}</button></div>
          </div>
        </section>
        ${this.renderPane()}
        <div class="mark"><b>Work办公</b><span>www.workbangong.com</span></div>
      </main>
      ${this.renderStatus()}
    </div>`;
  }
}
